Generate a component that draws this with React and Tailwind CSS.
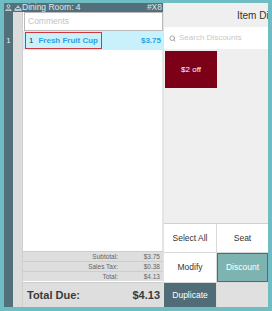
import { Search } from 'lucide-react'

const totals = [
  { label: 'Subtotal:', value: '$3.75' },
  { label: 'Sales Tax:', value: '$0.38' },
  { label: 'Total:', value: '$4.13' },
]

function SeatIcon() {
  return (
    <svg width="7" height="7" viewBox="0 0 10 10" fill="none" stroke="#e5e7eb" strokeWidth="1.2">
      <circle cx="5" cy="3" r="2" />
      <path d="M1 9.5 C1 6.5 9 6.5 9 9.5 Z" />
    </svg>
  )
}

function ClocheIcon() {
  return (
    <svg width="8" height="6" viewBox="0 0 12 9" fill="none" stroke="#e5e7eb" strokeWidth="1.2">
      <path d="M1.5 7 C1.5 2.5 10.5 2.5 10.5 7 Z" />
      <path d="M0.5 8 H11.5" />
      <circle cx="6" cy="1.8" r="0.8" />
    </svg>
  )
}

export default function App() {
  return (
    <div
      className="w-[272px] h-[311px] bg-[#6fbcc3] pt-[3px] pl-[4px] pr-[4px] pb-[4px] overflow-hidden"
      style={{ fontFamily: '"Liberation Sans", Arial, sans-serif' }}
    >
      <div className="flex h-full">
        {/* Ticket */}
        <div className="w-[159px] flex flex-col h-full">
          <div className="flex h-[9px] bg-[#52707b] text-[8.5px] leading-[9px] text-[#e3e7e9]">
            <div className="w-[9px] flex items-center justify-center"><SeatIcon /></div>
            <div className="w-[9px] flex items-center justify-center"><ClocheIcon /></div>
            <div className="flex-1 flex justify-between pr-[1px] whitespace-nowrap">
              <span>Dining Room: 4</span>
              <span>#X8</span>
            </div>
          </div>
          <div className="flex flex-1 min-h-0">
            <div className="w-[9px] bg-[#52707b] flex flex-col items-center text-white text-[7px]">
              <span className="mt-[24px]">1</span>
            </div>
            <div className="w-[10px] bg-[#dcdcdc] border-r border-[#cfcfcf]" />
            <div className="flex-1 flex flex-col bg-white">
              <div className="h-[19px] ml-[1px] border border-[#b9b9b9] flex items-center px-[3px] text-[8.5px] text-[#c4c4c4]">
                Comments
              </div>
              <div className="h-[19px] bg-[#c8f1fb] flex items-center justify-between pl-[2px] pr-[2px] text-[8px]">
                <div className="h-[17px] w-[77px] border-[1.5px] border-[#d2363a] flex items-center pl-[3px] gap-[5px]">
                  <span className="text-[#333]">1</span>
                  <span className="text-[#2aa2e3] font-bold">Fresh Fruit Cup</span>
                </div>
                <span className="text-[#2aa2e3] font-bold">$3.75</span>
              </div>
              <div className="flex-1 border-r border-[#e6e6e6]" />
              <div className="bg-[#dedede] text-[6.5px] text-[#666]">
                {totals.map(t => (
                  <div key={t.label} className="h-[10px] flex items-center border-t border-[#cdcdcd]">
                    <span className="w-[95px] text-right">{t.label}</span>
                    <span className="flex-1 text-right pr-[3px]">{t.value}</span>
                  </div>
                ))}
              </div>
              <div className="h-[25px] mt-[1px] bg-[#dedede] border-t border-[#cdcdcd] flex items-center justify-between pl-[4px] pr-[3px] text-[11px] font-bold text-[#3a3a3a]">
                <span>Total Due:</span>
                <span>$4.13</span>
              </div>
            </div>
          </div>
        </div>

        {/* Discounts */}
        <div className="flex-1 flex flex-col bg-[#efefef] overflow-hidden border-l border-[#e2e2e2]">
          <div className="h-[24px] flex items-center pl-[73px] text-[10px] text-[#333] whitespace-nowrap">
            Item Discounts
          </div>
          <div className="h-[22px] bg-white flex items-center pl-[5px] gap-[3px] text-[8px] text-[#c9c9c9] whitespace-nowrap">
            <Search size={7} className="text-[#888]" strokeWidth={2.5} />
            <span>Search Discounts</span>
          </div>
          <div className="pt-[2px] pl-[1px]">
            <div className="w-[52px] h-[37px] bg-[#7b0018] flex items-center justify-center text-white text-[8px]">
              $2 off
            </div>
          </div>
          <div className="flex-1" />
          <div className="h-[84px] grid grid-cols-[52px_1fr] grid-rows-[28px_29px_1fr] gap-[1px] bg-[#d9d9d9] border-t border-[#d0d0d0] text-[8.5px] text-[#333]">
            <div className="bg-white flex items-center justify-center">Select All</div>
            <div className="bg-white flex items-center justify-center">Seat</div>
            <div className="bg-white flex items-center justify-center">Modify</div>
            <div className="bg-[#7db4b2] border-[1.5px] border-[#d2363a] flex items-center justify-center text-white">Discount</div>
            <div className="bg-[#4f6c77] flex items-center justify-center text-white">Duplicate</div>
            <div className="bg-[#e0e0e0]" />
          </div>
        </div>
      </div>
    </div>
  )
}
